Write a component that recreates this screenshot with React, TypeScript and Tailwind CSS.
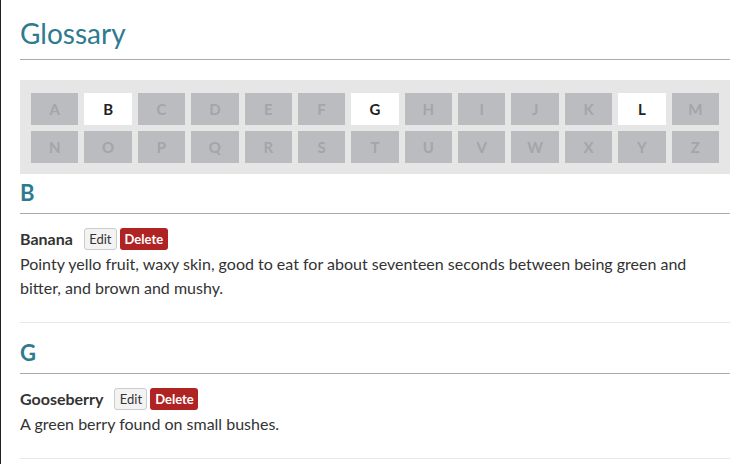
import React from "react";

const letters = "ABCDEFGHIJKLMNOPQRSTUVWXYZ".split("");
const active = new Set(["B", "G", "L"]);

const entries = [
  {
    letter: "B",
    items: [
      {
        term: "Banana",
        def: "Pointy yello fruit, waxy skin, good to eat for about seventeen seconds between being green and bitter, and brown and mushy.",
      },
    ],
  },
  {
    letter: "G",
    items: [{ term: "Gooseberry", def: "A green berry found on small bushes." }],
  },
];

export default function App() {
  return (
    <div
      className="min-h-[464px] w-[745px] border-l border-[#222] bg-white pl-[19px] pr-[15px] text-[#333]"
      style={{ fontFamily: "Lato, 'Open Sans', sans-serif" }}
    >
      <h1 className="border-b border-[#aaa] pt-[14px] pb-[7px] text-[28px] font-normal leading-[38px] text-[#2d7b8e]">
        Glossary
      </h1>
      <div className="mt-[20px] grid grid-cols-13 gap-[6px] bg-[#e6e6e6] px-[11px] pt-[13px] pb-[11px]">
        {letters.map((l) => (
          <div
            key={l}
            className={
              active.has(l)
                ? "flex h-[32px] items-center justify-center bg-white text-[15px] font-bold text-[#222]"
                : "flex h-[32px] items-center justify-center bg-[#bbbcbf] text-[15px] font-bold text-[#a4a5a8]"
            }
          >
            {l}
          </div>
        ))}
      </div>
      {entries.map((sec, i) => (
        <section key={sec.letter}>
          <h2
            className={
              (i === 0 ? "mt-[6px] " : "mt-[17px] ") +
              "border-b border-[#aaa] pb-[7px] text-[22px] font-bold leading-[26px] text-[#2d7b8e]"
            }
          >
            {sec.letter}
          </h2>
          {sec.items.map((it) => (
            <div key={it.term} className="border-b border-[#e8e8e8] pb-[22px]">
              <div className="mt-[14px] flex h-[22px] items-center">
                <span className="text-[16px] font-bold text-[#333]">{it.term}</span>
                <button className="ml-[11px] h-[22px] w-[33px] rounded-[3px] border border-[#ccc] bg-[#f3f3f3] text-[13px] leading-[20px] text-[#333]">
                  Edit
                </button>
                <button className="ml-[3px] h-[22px] w-[48px] rounded-[3px] bg-[#b02323] text-[13px] font-bold leading-[22px] text-white">
                  Delete
                </button>
              </div>
              <p className="mt-[2px] pr-[40px] text-[16px] leading-[24px] text-[#333]">{it.def}</p>
            </div>
          ))}
        </section>
      ))}
    </div>
  );
}
